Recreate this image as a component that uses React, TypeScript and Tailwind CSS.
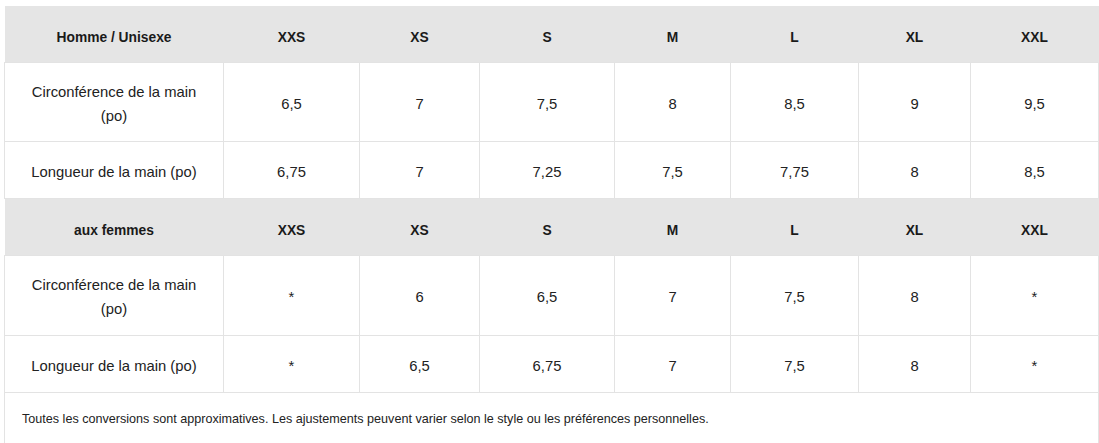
import React from "react";

const sizes = ["XXS", "XS", "S", "M", "L", "XL", "XXL"];
const widths = [219, 136, 120, 135, 116, 128, 112, 128];

const sections = [
  {
    title: "Homme / Unisexe",
    head: "h-[56px]",
    rows: [
      { label: "Circonférence de la main (po)", values: ["6,5", "7", "7,5", "8", "8,5", "9", "9,5"], h: "h-[79px]" },
      { label: "Longueur de la main (po)", values: ["6,75", "7", "7,25", "7,5", "7,75", "8", "8,5"], h: "h-[57px]" },
    ],
  },
  {
    title: "aux femmes",
    head: "h-[57px]",
    rows: [
      { label: "Circonférence de la main (po)", values: ["*", "6", "6,5", "7", "7,5", "8", "*"], h: "h-[80px]" },
      { label: "Longueur de la main (po)", values: ["*", "6,5", "6,75", "7", "7,5", "8", "*"], h: "h-[57px]" },
    ],
  },
];

export default function App() {
  return (
    <div className="bg-white w-[1099px] h-[443px] overflow-hidden pt-[6px] pl-[4px] font-['Liberation_Sans',Arial,sans-serif] text-[#222]">
      <table className="table-fixed border-collapse w-[1095px] text-[14.8px] leading-[24px]">
        <colgroup>
          {widths.map((w, i) => (
            <col key={i} style={{ width: w }} />
          ))}
        </colgroup>
        <tbody>
          {sections.map((s) => (
            <React.Fragment key={s.title}>
              <tr className={`bg-[#e5e5e5] ${s.head}`}>
                <th className="font-bold text-[13.8px] text-[#1a1a1a] text-center px-4 pt-[8px]">{s.title}</th>
                {sizes.map((z) => (
                  <th key={z} className="font-bold text-[13.8px] text-[#1a1a1a] text-center pt-[8px]">{z}</th>
                ))}
              </tr>
              {s.rows.map((r) => (
                <tr key={r.label} className={r.h}>
                  <td className="border border-[#e3e3e3] text-center px-4 pt-[16px] pb-[12px]">{r.label}</td>
                  {r.values.map((v, i) => (
                    <td key={i} className="border border-[#e3e3e3] text-center pt-[4px]">{v}</td>
                  ))}
                </tr>
              ))}
            </React.Fragment>
          ))}
          <tr className="h-[56px]">
            <td colSpan={8} className="border border-[#e3e3e3] border-b-0 text-[12.6px] pl-[17px] pb-[2px] align-middle">
              Toutes les conversions sont approximatives. Les ajustements peuvent varier selon le style ou les préférences personnelles.
            </td>
          </tr>
        </tbody>
      </table>
    </div>
  );
}
